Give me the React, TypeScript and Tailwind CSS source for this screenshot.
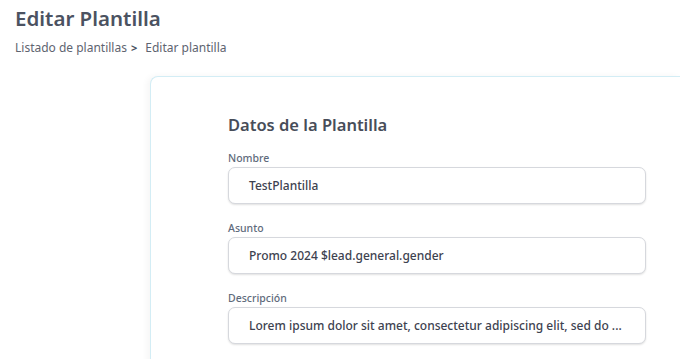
import React from "react";

function Field({ label, value, className = "" }: { label: string; value: string; className?: string }) {
  return (
    <div className={className}>
      <div className="text-[10.5px] font-medium leading-[14px] text-[#5f6b7c]">{label}</div>
      <div className="mt-[2px] flex h-[37px] w-[418px] items-center rounded-[7px] border border-[#d6d8dd] bg-white pl-[20px] pr-[16px] shadow-[0_1px_2px_rgba(0,0,0,0.12)]">
        <span className="whitespace-nowrap text-[12px] font-medium text-[#3d4250]">{value}</span>
      </div>
    </div>
  );
}

export default function App() {
  return (
    <div className="h-[359px] w-[680px] overflow-hidden bg-white" style={{ fontFamily: '"Noto Sans", "Open Sans", sans-serif' }}>
      <div className="pl-[15px] pt-[4px]">
        <h1 className="text-[20.5px] font-semibold leading-[28px] text-[#4b5261]">Editar Plantilla</h1>
        <div className="mt-[8px] flex items-center text-[12px] leading-[16px] text-[#5e6470]">
          <span>Listado de plantillas</span>
          <span className="ml-[4px] text-[11px] font-bold text-[#4b5261]">&gt;</span>
          <span className="ml-[8px]">Editar plantilla</span>
        </div>
      </div>
      <div className="ml-[150px] mt-[20px] h-[300px] rounded-tl-[8px] border-l border-t border-[#d3edf5] bg-white pl-[77px] pt-[38px] shadow-[-3px_0_6px_rgba(0,0,0,0.04)]">
        <h2 className="text-[16.5px] font-semibold leading-[20px] text-[#474d59]">Datos de la Plantilla</h2>
        <Field className="mt-[16px]" label="Nombre" value="TestPlantilla" />
        <Field className="mt-[17px]" label="Asunto" value="Promo 2024 $lead.general.gender" />
        <Field className="mt-[17px]" label="Descripción" value="Lorem ipsum dolor sit amet, consectetur adipiscing elit, sed do ..." />
      </div>
    </div>
  );
}
